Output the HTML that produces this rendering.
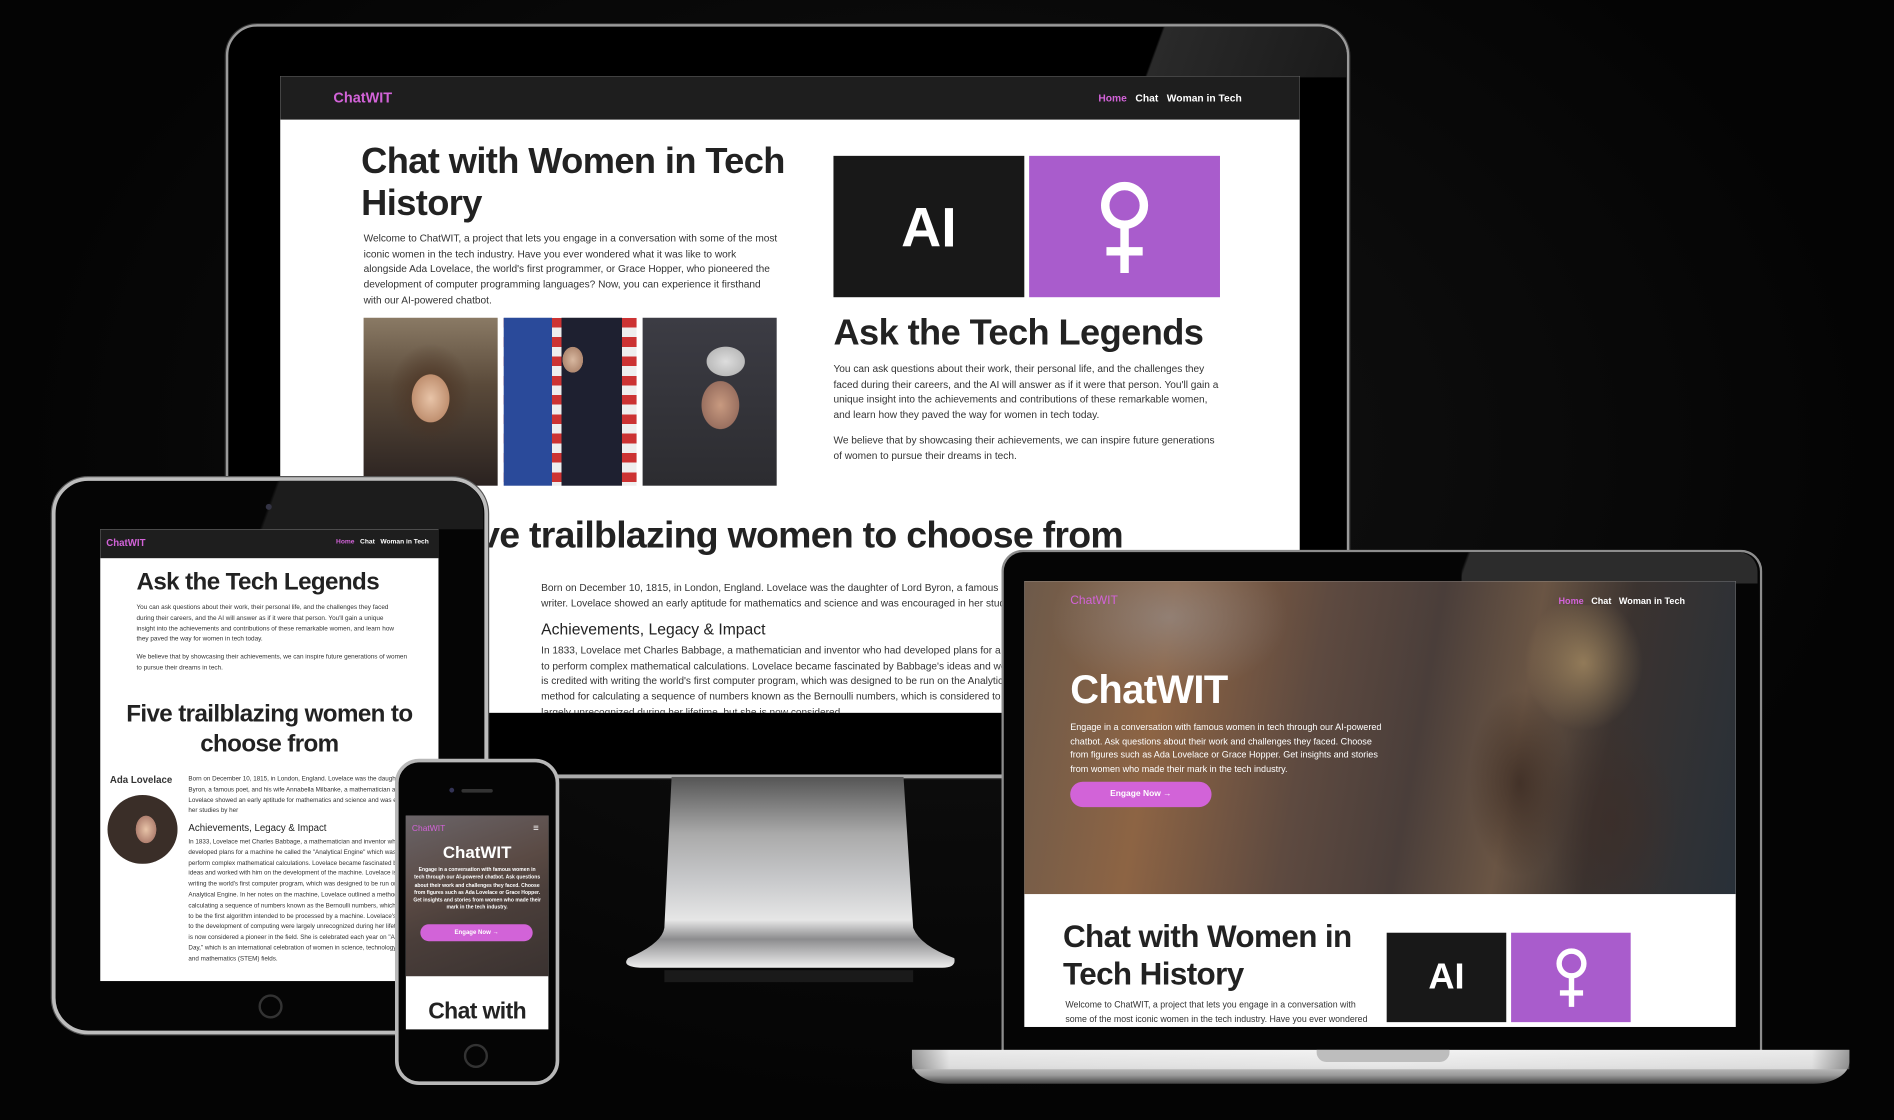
<!DOCTYPE html>
<html><head><meta charset="utf-8">
<style>
*{margin:0;padding:0;box-sizing:border-box}
html,body{width:1894px;height:1120px;overflow:hidden;background:#050505}
#w{position:absolute;left:0;top:0;width:1568px;height:927px;transform:scale(1.20791,1.20820);transform-origin:0 0;background:radial-gradient(ellipse at 50% 40%,#141414,#040404 70%);font-family:"Liberation Sans",sans-serif;overflow:hidden}
.abs{position:absolute}
.scr{position:absolute;overflow:hidden;background:#fff}
.nav{position:absolute;left:0;right:0;top:0;background:#1e1e1e;color:#fff;font-weight:bold}
.pu{color:#d263d8}
h1,h2{font-family:"Liberation Sans",sans-serif;font-weight:bold;color:#222;letter-spacing:-0.5px}
p{color:#333}
.ai{background:#181818;color:#fff;font-weight:bold;display:flex;align-items:center;justify-content:center}
.ve{background:#a95ccc;display:flex;align-items:center;justify-content:center}
.hero{background:linear-gradient(100deg,#6d5a4a 0%,#8d6444 20%,#5e4a40 40%,#4a3e3a 55%,#6a5544 68%,#3b3330 80%,#283038 100%)}
.btn{background:#d263d8;color:#fff;border-radius:20px;display:flex;align-items:center;justify-content:center;font-weight:bold}
</style></head><body><div id="w">

<!-- MONITOR -->
<div class="abs" style="left:187px;top:20px;width:930px;height:624px;border-radius:26px 26px 4px 4px;background:#000;border:2px solid #9a9a9a;box-shadow:0 0 0 1px #333"></div>
<div class="abs" style="left:940px;top:22px;width:175px;height:42px;background:linear-gradient(110deg,transparent 0 12%,#2a2a2a 13%,#1a1a1a);border-radius:0 24px 0 0"></div>
<div class="abs" style="left:188px;top:641px;width:928px;height:3px;background:#aaa"></div>
<!-- stand -->
<svg class="abs" style="left:510px;top:643px" width="290" height="170"><defs><linearGradient id="sg" x1="0" y1="0" x2="0" y2="1"><stop offset="0" stop-color="#555"/><stop offset=".3" stop-color="#aaa"/><stop offset=".55" stop-color="#c9cacc"/><stop offset=".75" stop-color="#e6e6e6"/><stop offset=".85" stop-color="#8c8c8e"/><stop offset="1" stop-color="#eee"/></linearGradient></defs><path d="M46 0 L238 0 L246 125 Q252 140 280 150 Q282 158 270 158 L20 158 Q4 157 10 150 Q38 138 40 125 Z" fill="url(#sg)"/><rect x="40" y="160" width="206" height="10" fill="#1a1a1a"/></svg>

<div class="scr" style="left:232px;top:63px;width:844px;height:527px">
  <div class="nav" style="height:36px"><span class="pu abs" style="left:44px;top:11px;font-size:12px">ChatWIT</span>
  <span class="abs" style="right:48px;top:13px;font-size:8.5px"><span class="pu">Home</span>&nbsp;&nbsp;&nbsp;Chat&nbsp;&nbsp;&nbsp;Woman in Tech</span></div>
  <h1 class="abs" style="left:67px;top:53px;font-size:30px;line-height:35px;width:380px">Chat with Women in Tech History</h1>
  <p class="abs" style="left:69px;top:128px;width:345px;font-size:8.4px;line-height:12.7px">Welcome to ChatWIT, a project that lets you engage in a conversation with some of the most iconic women in the tech industry. Have you ever wondered what it was like to work alongside Ada Lovelace, the world's first programmer, or Grace Hopper, who pioneered the development of computer programming languages? Now, you can experience it firsthand with our AI-powered chatbot.</p>
  <div class="abs" style="left:69px;top:200px;width:111px;height:139px;background:radial-gradient(ellipse 22px 28px at 50% 48%,#e8c4a8,#c09070 70%,transparent 72%),radial-gradient(ellipse 45px 55px at 50% 45%,#4a3222,transparent 75%),linear-gradient(#8a7a65,#5a4a3a 40%,#2a2220)"></div>
  <div class="abs" style="left:185px;top:200px;width:110px;height:139px;background:radial-gradient(ellipse 12px 15px at 52% 25%,#d8b8a0,#b08870 70%,transparent 72%),linear-gradient(90deg,transparent 48px,#1e2030 48px 98px,transparent 98px),linear-gradient(90deg,#2a4a9a 0 40px,transparent 40px),repeating-linear-gradient(#c33 0 8px,#eee 8px 16px)"></div>
  <div class="abs" style="left:300px;top:200px;width:111px;height:139px;background:radial-gradient(ellipse 22px 28px at 58% 52%,#c89a80,#9a7060 70%,transparent 72%),radial-gradient(ellipse 26px 20px at 62% 26%,#ddd,#bbb 60%,transparent 62%),linear-gradient(#3c3c44,#2c2c30)"></div>
  <div class="ai abs" style="left:458px;top:66px;width:158px;height:117px;font-size:46px">AI</div>
  <div class="ve abs" style="left:620px;top:66px;width:158px;height:117px"><svg width="50" height="80" viewBox="0 0 50 80"><circle cx="25" cy="22" r="16" fill="none" stroke="#fff" stroke-width="7"/><path d="M25 38V78M10 60H40" stroke="#fff" stroke-width="7"/></svg></div>
  <h2 class="abs" style="left:458px;top:196px;font-size:30px">Ask the Tech Legends</h2>
  <p class="abs" style="left:458px;top:236px;width:320px;font-size:8.4px;line-height:12.7px">You can ask questions about their work, their personal life, and the challenges they faced during their careers, and the AI will answer as if it were that person. You'll gain a unique insight into the achievements and contributions of these remarkable women, and learn how they paved the way for women in tech today.</p>
  <p class="abs" style="left:458px;top:295px;width:320px;font-size:8.4px;line-height:12.7px">We believe that by showcasing their achievements, we can inspire future generations of women to pursue their dreams in tech.</p>
  <h2 class="abs" style="left:0;right:0;top:362px;text-align:center;font-size:31px;letter-spacing:-0.6px;padding-right:8px;white-space:nowrap">Five trailblazing women to choose from</h2>
  <p class="abs" style="left:216px;top:417px;width:620px;font-size:8.4px;line-height:12.7px;white-space:nowrap">Born on December 10, 1815, in London, England. Lovelace was the daughter of Lord Byron, a famous poet<br>writer. Lovelace showed an early aptitude for mathematics and science and was encouraged in her studies</p>
  <div class="abs" style="left:216px;top:450px;font-size:13px;color:#222">Achievements, Legacy &amp; Impact</div>
  <p class="abs" style="left:216px;top:469px;width:620px;font-size:8.4px;line-height:12.7px;white-space:nowrap">In 1833, Lovelace met Charles Babbage, a mathematician and inventor who had developed plans for a machine<br>to perform complex mathematical calculations. Lovelace became fascinated by Babbage's ideas and worked<br>is credited with writing the world's first computer program, which was designed to be run on the Analytical<br>method for calculating a sequence of numbers known as the Bernoulli numbers, which is considered to be<br>largely unrecognized during her lifetime, but she is now considered</p>
</div>

<!-- TABLET -->
<div class="abs" style="left:43px;top:395px;width:361px;height:461px;border-radius:30px;background:#050505;border:3px solid #bdbdbd;box-shadow:0 0 0 1px #555"></div>
<div class="abs" style="left:150px;top:398px;width:250px;height:40px;background:linear-gradient(110deg,transparent 30%,#1c1c1c 31%);border-radius:0 26px 0 0"></div>
<div class="abs" style="left:220px;top:417px;width:5px;height:5px;border-radius:50%;background:#334"></div>
<div class="abs" style="left:214px;top:823px;width:20px;height:20px;border-radius:50%;border:2px solid #333"></div>
<div class="scr" style="left:83px;top:438px;width:280px;height:374px">
  <div class="nav" style="height:24px"><span class="pu abs" style="left:5px;top:7px;font-size:8px">ChatWIT</span><span class="abs" style="right:8px;top:8px;font-size:5.5px"><span class="pu">Home</span>&nbsp;&nbsp;&nbsp;Chat&nbsp;&nbsp;&nbsp;Woman in Tech</span></div>
  <h2 class="abs" style="left:30px;top:33px;font-size:20px">Ask the Tech Legends</h2>
  <p class="abs" style="left:30px;top:61px;width:220px;font-size:5.3px;line-height:8.8px">You can ask questions about their work, their personal life, and the challenges they faced during their careers, and the AI will answer as if it were that person. You'll gain a unique insight into the achievements and contributions of these remarkable women, and learn how they paved the way for women in tech today.</p>
  <p class="abs" style="left:30px;top:102px;width:225px;font-size:5.3px;line-height:8.8px">We believe that by showcasing their achievements, we can inspire future generations of women to pursue their dreams in tech.</p>
  <h2 class="abs" style="left:0;right:0;top:141px;text-align:center;font-size:20px;line-height:25px">Five trailblazing women to<br>choose from</h2>
  <div class="abs" style="left:8px;top:203px;font-size:8px;font-weight:bold;color:#333">Ada Lovelace</div>
  <div class="abs" style="left:6px;top:220px;width:58px;height:57px;border-radius:50%;background:radial-gradient(ellipse 12px 16px at 55% 50%,#e8c4a8,#b08070 70%,transparent 72%),#3a2e28"></div>
  <p class="abs" style="left:73px;top:203px;width:210px;font-size:5.2px;line-height:8.8px">Born on December 10, 1815, in London, England. Lovelace was the daughter of Lord Byron, a famous poet, and his wife Annabella Milbanke, a mathematician and writer. Lovelace showed an early aptitude for mathematics and science and was encouraged in her studies by her</p>
  <div class="abs" style="left:73px;top:243px;font-size:8px;color:#222">Achievements, Legacy &amp; Impact</div>
  <p class="abs" style="left:73px;top:255px;width:205px;font-size:5.2px;line-height:8.8px">In 1833, Lovelace met Charles Babbage, a mathematician and inventor who had developed plans for a machine he called the "Analytical Engine" which was designed to perform complex mathematical calculations. Lovelace became fascinated by Babbage's ideas and worked with him on the development of the machine. Lovelace is credited with writing the world's first computer program, which was designed to be run on the Analytical Engine. In her notes on the machine, Lovelace outlined a method for calculating a sequence of numbers known as the Bernoulli numbers, which is considered to be the first algorithm intended to be processed by a machine. Lovelace's contributions to the development of computing were largely unrecognized during her lifetime, but she is now considered a pioneer in the field. She is celebrated each year on "Ada Lovelace Day," which is an international celebration of women in science, technology, engineering and mathematics (STEM) fields.</p>
</div>

<!-- PHONE -->
<div class="abs" style="left:327px;top:628px;width:136px;height:270px;border-radius:20px;background:#050505;border:3px solid #b8b8b8"></div>
<div class="abs" style="left:372px;top:652px;width:4px;height:4px;border-radius:50%;background:#335"></div>
<div class="abs" style="left:382px;top:653px;width:26px;height:3px;border-radius:2px;background:#333"></div>
<div class="abs" style="left:384px;top:864px;width:20px;height:20px;border-radius:50%;border:2px solid #333"></div>
<div class="scr" style="left:336px;top:675px;width:118px;height:177px">
  <div class="hero abs" style="left:0;top:0;width:118px;height:133px;background:linear-gradient(160deg,#6a6468,#5a4a44 40%,#4a3e3a 60%,#3a3230)"></div>
  <span class="pu abs" style="left:5px;top:8px;font-size:7px">ChatWIT</span>
  <span class="abs" style="right:8px;top:6px;color:#fff;font-size:8px">≡</span>
  <div class="abs" style="left:0;right:0;top:22px;text-align:center;color:#fff;font-weight:bold;font-size:14px">ChatWIT</div>
  <div class="abs" style="left:6px;right:6px;top:42px;text-align:center;color:#fff;font-size:4.2px;line-height:6.3px;font-weight:bold">Engage in a conversation with famous women in tech through our AI-powered chatbot. Ask questions about their work and challenges they faced. Choose from figures such as Ada Lovelace or Grace Hopper. Get insights and stories from women who made their mark in the tech industry.</div>
  <div class="btn abs" style="left:12px;top:90px;width:93px;height:14px;font-size:5px">Engage Now →</div>
  <h2 class="abs" style="left:0;right:0;top:152px;text-align:center;font-size:19px">Chat with</h2>
</div>

<!-- LAPTOP -->
<div class="abs" style="left:829px;top:455px;width:630px;height:416px;border-radius:18px 18px 0 0;background:#050505;border:2px solid #8d8d8d;border-bottom:none"></div>
<div class="abs" style="left:1210px;top:457px;width:245px;height:26px;background:linear-gradient(110deg,transparent 2%,#2c2c2c 3%);border-radius:0 16px 0 0"></div>
<div class="abs" style="left:755px;top:869px;width:776px;height:28px;border-radius:0 0 30px 30px/0 0 18px 18px;background:linear-gradient(#f0f0f0,#c8c8c8 45%,#9a9a9a 75%,#444);"></div>
<div class="abs" style="left:755px;top:869px;width:776px;height:16px;background:linear-gradient(90deg,#777,#e8e8e8 4%,#f4f4f4 50%,#e8e8e8 96%,#777);opacity:.7"></div>
<div class="abs" style="left:1090px;top:869px;width:110px;height:10px;border-radius:0 0 8px 8px;background:#bdbdbd"></div>
<div class="scr" style="left:848px;top:481px;width:589px;height:369px">
  <div class="hero abs" style="left:0;top:0;width:589px;height:259px"></div>
  <div class="abs" style="left:0;top:0;width:300px;height:150px;background:radial-gradient(ellipse 140px 90px at 40% 20%,rgba(150,150,155,.55),transparent 70%)"></div>
  <div class="abs" style="left:330px;top:30px;width:160px;height:229px;background:radial-gradient(ellipse 60px 110px at 50% 60%,#3a2a22,transparent 70%);opacity:.8"></div>
  <div class="abs" style="left:360px;top:20px;width:229px;height:239px;background:radial-gradient(ellipse 70px 80px at 45% 20%,rgba(190,160,110,.6),transparent 70%),radial-gradient(ellipse 80px 120px at 55% 75%,rgba(60,45,40,.7),transparent 70%)"></div>
  <span class="pu abs" style="left:38px;top:11px;font-size:10px">ChatWIT</span>
  <span class="abs" style="right:42px;top:12px;color:#fff;font-size:7.5px;font-weight:bold"><span class="pu">Home</span>&nbsp;&nbsp;&nbsp;Chat&nbsp;&nbsp;&nbsp;Woman in Tech</span>
  <div class="abs" style="left:38px;top:71px;color:#fff;font-weight:bold;font-size:33px;letter-spacing:-0.5px">ChatWIT</div>
  <div class="abs" style="left:38px;top:115px;width:258px;color:#fff;font-size:7.5px;line-height:11.5px">Engage in a conversation with famous women in tech through our AI-powered chatbot. Ask questions about their work and challenges they faced. Choose from figures such as Ada Lovelace or Grace Hopper. Get insights and stories from women who made their mark in the tech industry.</div>
  <div class="btn abs" style="left:38px;top:166px;width:117px;height:21px;font-size:7px">Engage Now →</div>
  <h2 class="abs" style="left:32px;top:279px;width:260px;font-size:26px;line-height:31px">Chat with Women in Tech History</h2>
  <p class="abs" style="left:34px;top:345px;width:260px;font-size:7.3px;line-height:11.5px">Welcome to ChatWIT, a project that lets you engage in a conversation with some of the most iconic women in the tech industry. Have you ever wondered</p>
  <div class="ai abs" style="left:300px;top:291px;width:99px;height:74px;font-size:30px">AI</div>
  <div class="ve abs" style="left:403px;top:291px;width:99px;height:74px"><svg width="32" height="52" viewBox="0 0 50 80"><circle cx="25" cy="22" r="16" fill="none" stroke="#fff" stroke-width="7"/><path d="M25 38V78M10 60H40" stroke="#fff" stroke-width="7"/></svg></div>
</div>

</div></body></html>
